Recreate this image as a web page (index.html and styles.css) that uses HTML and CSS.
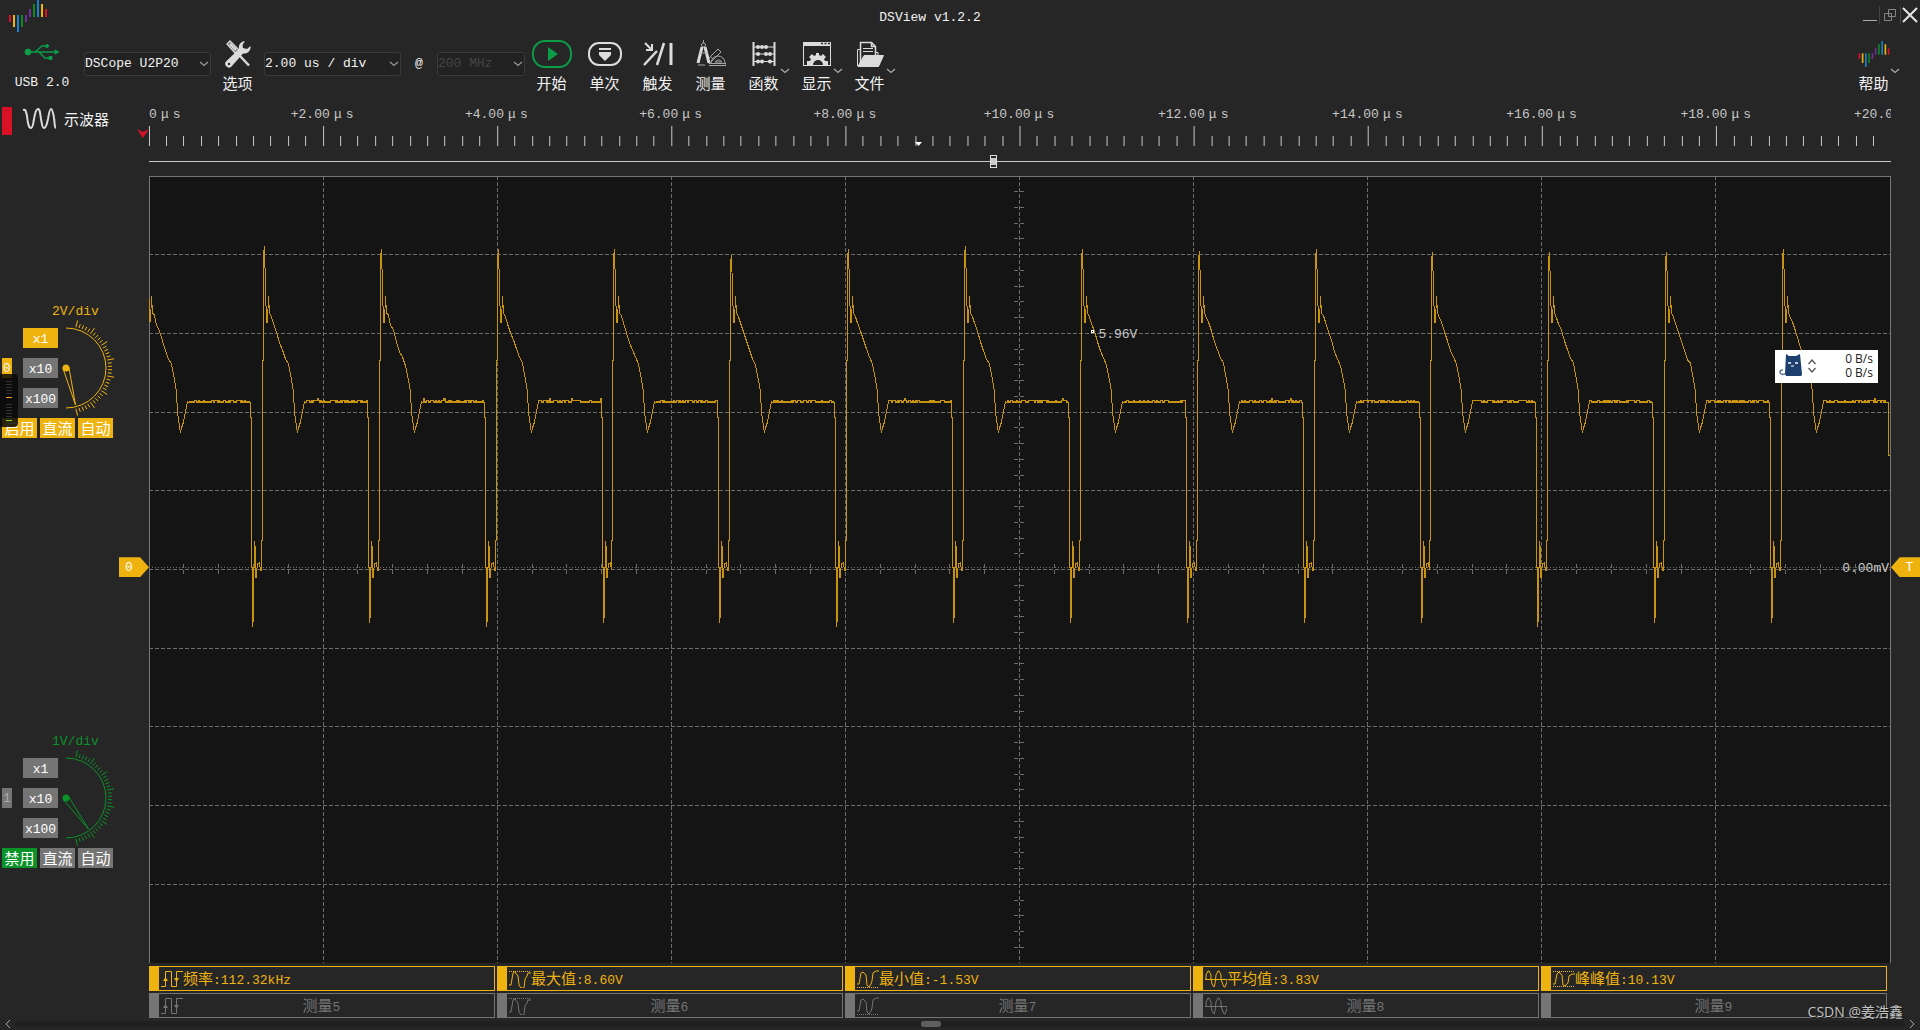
FILE: index.html
```html
<!DOCTYPE html>
<html lang="zh-CN">
<head>
<meta charset="utf-8">
<title>DSView v1.2.2</title>
<link rel="stylesheet" href="styles.css">
</head>
<body>
<svg class="defs" aria-hidden="true">
  <symbol id="logo" viewBox="0 0 38 32">
    <g fill="#d81126"><path d="M0 15h2v7H0zM36 9h2v8h-2z"/></g>
    <g fill="#f2b20f"><path d="M4 15h2v12H4zM32 4h2v13h-2z"/></g>
    <g fill="#1783cf"><path d="M8 15h2v17H8zM28 0h2v17h-2z"/></g>
    <g fill="#0d8a20"><path d="M12 15h2v12h-2zM24 4h2v13h-2z"/></g>
    <g fill="#72309a"><path d="M16 15h2v7h-2zM20 9h2v8h-2z"/></g>
  </symbol>
  <symbol id="chevron" viewBox="0 0 10 6"><path d="M1 1l4 3.500 4-3.500" fill="none" stroke="currentColor" stroke-width="1.300"/></symbol>
  <symbol id="m-freq" viewBox="0 0 22 18"><path d="M0 16.500h4.500V1.500h6v15h5V1.500h6.500" fill="none" stroke="currentColor"/><path d="M2 11h5l-2.500-4zM13 8h5l-2.500 4z" fill="currentColor"/></symbol>
  <symbol id="m-max" viewBox="0 0 22 18"><path d="M0 1.500h22" stroke="currentColor" stroke-dasharray="1 1"/><path d="M0 15h2l2-12 2-1 3 4 1 9 2 3h3l1-9 2-3 1-3h3" fill="none" stroke="currentColor"/></symbol>
  <symbol id="m-min" viewBox="0 0 22 18"><path d="M0 17.500h22" stroke="currentColor" stroke-dasharray="1 1"/><path d="M0 14h2l2-11 2-1 3 3 1 10 2 2 2-3 1-3 1-8 3-2h3" fill="none" stroke="currentColor"/></symbol>
  <symbol id="m-avg" viewBox="0 0 22 18"><path d="M0 9.500h22M1 9V5l2-4h1l2 4v4l1 5 2 3 1-3 1-9 2-4h1l2 4v4l2 6 1 2h1l2-5V9" fill="none" stroke="currentColor"/></symbol>
  <symbol id="m-pp" viewBox="0 0 22 18"><path d="M0 1.500h22M0 16.500h22" stroke="currentColor" stroke-dasharray="1 1"/><path d="M0 14h2l2-10 2-2 3 3 1 10 2 1 3-3 1-7 3-2h3" fill="none" stroke="currentColor"/></symbol>
</svg>

<header class="titlebar">
  <svg class="app-logo" width="38" height="32"><use href="#logo"/></svg>
  <h1 class="app-title">DSView v1.2.2</h1>
  <div class="window-controls">
    <button class="win-btn" aria-label="最小化"><svg width="14" height="16"><path d="M0 13.500h14" stroke="#aaa"/></svg></button>
    <button class="win-btn" aria-label="还原"><svg width="14" height="16"><path d="M5.500 2.500h7v7h-7zM1.500 6.500h7v7h-7z" fill="none" stroke="#858585"/></svg></button>
    <button class="win-btn" aria-label="关闭"><svg width="16" height="16"><path d="M1 1l14 14M15 1L1 15" stroke="#e6e6e6" stroke-width="2"/></svg></button>
  </div>
</header>

<nav class="toolbar">
  <button class="tool tool-usb">
    <span class="tool-icon"><svg width="36" height="18" viewBox="0 0 36 18" fill="#0b9c48" stroke="#0b9c48"><circle cx="4" cy="9" r="3"/><path d="M4 9h28M11 9l7-6h4M15 9l6 6h5" fill="none" stroke-width="1.500"/><path d="M31 7l4 2-4 2z"/><circle cx="23" cy="3" r="1.500"/><path d="M25 13.500h3v3h-3z"/></svg></span>
    <span>USB 2.0</span>
  </button>
  <label class="combo combo-device"><select aria-label="设备"><option>DSCope U2P20</option></select><svg width="10" height="6"><use href="#chevron"/></svg></label>
  <button class="tool">
    <span class="tool-icon"><svg width="26" height="28" viewBox="0 0 26 28"><path d="M2 4l3-3 9 9-4 3z" fill="#777" stroke="#d8d8d8" stroke-width="1.300"/><path d="M5 4l6 6M15 16l9 9.500" stroke="#d8d8d8" stroke-width="2.500"/><path d="M20 1a6.500 6.500 0 0 0-6 8L1.500 21a3.600 3.600 0 0 0 5 5.500L18 13.500a6.500 6.500 0 0 0 7.500-7.500l-3.500 3-4-1-.5-3z" fill="#dcdcdc"/><circle cx="4" cy="24" r="1.200" fill="#262626"/></svg></span>
    <span class="cjk">选项</span>
  </button>
  <label class="combo combo-timebase"><select aria-label="时基"><option>2.00 us / div</option></select><svg width="10" height="6"><use href="#chevron"/></svg></label>
  <span class="at">@</span>
  <label class="combo combo-rate"><select aria-label="采样率" disabled><option>200 MHz</option></select><svg width="10" height="6"><use href="#chevron"/></svg></label>
  <button class="tool">
    <span class="tool-icon"><svg width="40" height="28"><rect x="1" y="1" width="38" height="26" rx="12" fill="none" stroke="#0b9c48" stroke-width="2"/><path d="M16 7v14l10-7z" fill="#0b9c48"/></svg></span>
    <span class="cjk">开始</span>
  </button>
  <button class="tool">
    <span class="tool-icon"><svg width="34" height="24"><rect x="1" y="1" width="32" height="22" rx="10" fill="none" stroke="#dcdcdc" stroke-width="2"/><path d="M11 6h12v2H11zM11 10h12v3l-6 6-6-6z" fill="#dcdcdc"/></svg></span>
    <span class="cjk">单次</span>
  </button>
  <button class="tool">
    <span class="tool-icon"><svg width="30" height="24" fill="none" stroke="#dcdcdc"><path d="M1 23L14 9M14 23l7-22" stroke-width="2.500"/><path d="M28 1v22" stroke-width="3"/><path d="M2 1l6 6M9 2v6H3" stroke-width="2"/></svg></span>
    <span class="cjk">触发</span>
  </button>
  <button class="tool">
    <span class="tool-icon"><svg width="30" height="27" fill="none" stroke="#a8a8a8"><path d="M12 19L22 9l3 3-10 10M14 16l3 3M15 23a7 7 0 0 1 14 0M13 25.500h17v-2H13M19 22a4 4 0 0 1 7 0z"/><circle cx="7.500" cy="5" r="2"/><path d="M7.500 0v3M2 25h7"/><path d="M6 7L2 23M9 7l4 16" stroke-width="3" stroke="#dcdcdc"/><path d="M4 13h7"/></svg></span>
    <span class="cjk">测量</span>
  </button>
  <button class="tool">
    <span class="tool-icon"><svg width="24" height="24"><path d="M1.500 0v24M22.500 0v24" stroke="#dcdcdc" stroke-width="2"/><path d="M2 5h20M2 12h20M2 19.500h20" stroke="#dcdcdc"/><g fill="#dcdcdc"><circle cx="6" cy="5" r="2"/><circle cx="10" cy="5" r="2"/><circle cx="14" cy="5" r="2"/><circle cx="6" cy="12" r="2"/><circle cx="14" cy="12" r="2"/><circle cx="18" cy="12" r="2"/><circle cx="6" cy="19.500" r="2"/><circle cx="10" cy="19.500" r="2"/><circle cx="18" cy="19.500" r="2"/></g></svg></span>
    <span class="cjk">函数</span>
    <svg class="tool-arrow" width="10" height="6"><use href="#chevron"/></svg>
  </button>
  <button class="tool">
    <span class="tool-icon"><svg width="28" height="24"><path d="M0 0h28v24H0zM1 4v19h26V4z" fill="#dcdcdc" fill-rule="evenodd"/><path d="M18 1.500h2M21.500 1.500h2M25 1.500h2" stroke="#262626" stroke-width="1.500"/><path d="M4 23v-4h3l1-2-2-2 3-3 2 2 2-1v-2h3v2l2 1 2-2 3 3-2 2 1 2h3v4h-5a5 5 0 0 0-10 0z" fill="#dcdcdc"/></svg></span>
    <span class="cjk">显示</span>
    <svg class="tool-arrow" width="10" height="6"><use href="#chevron"/></svg>
  </button>
  <button class="tool">
    <span class="tool-icon"><svg width="28" height="26" fill="none" stroke="#dcdcdc"><path d="M4.500 22V1.500h11l4 4V15M15.500 1.500v4h4" stroke-width="1.500"/><path d="M7 7.500h10M7 10.500h10M4 8.500H1.500V25M20 11.500h2V15"/><path d="M2 25.500l6-11h19.500l-5 11z" fill="#dcdcdc"/></svg></span>
    <span class="cjk">文件</span>
    <svg class="tool-arrow" width="10" height="6"><use href="#chevron"/></svg>
  </button>
  <button class="tool tool-help">
    <span class="tool-icon"><svg width="32" height="26"><use href="#logo"/></svg></span>
    <span class="cjk">帮助</span>
    <svg class="tool-arrow" width="10" height="6"><use href="#chevron"/></svg>
  </button>
</nav>

<main class="workspace">
  <aside class="side">
    <div class="mode">
      <span class="mode-bar"></span>
      <svg width="34" height="22" viewBox="0 0 34 22"><path d="M1 2c3-1 3 2 4 6 1 9 2 12 4 12s2-4 3-9c1-6 2-10 4-10s2 4 3 10c1 5 1 9 3 9s3-4 4-9c1-6 2-10 3-10s2 3 3 9c1 5 0 9 2 10" fill="none" stroke="#dcdcdc" stroke-width="2"/></svg>
      <span class="cjk">示波器</span>
    </div>
    <div class="channels">
      <section class="channel ch0">
        <h2 class="scale">2V/div</h2>
        <div class="probe">
          <span class="tag">0</span>
          <div class="factors"><button class="key on">x1</button><button class="key">x10</button><button class="key">x100</button></div>
          <svg class="dial" width="54" height="100" data-tip="9.5,37"></svg>
        </div>
        <div class="toggles cjk"><button class="key on">启用</button><button class="key on">直流</button><button class="key on">自动</button></div>
      </section>
      <section class="channel ch1">
        <h2 class="scale">1V/div</h2>
        <div class="probe">
          <span class="tag">1</span>
          <div class="factors"><button class="key">x1</button><button class="key">x10</button><button class="key">x100</button></div>
          <svg class="dial" width="54" height="100" data-tip="22.5,31"></svg>
        </div>
        <div class="toggles cjk"><button class="key on">禁用</button><button class="key">直流</button><button class="key">自动</button></div>
      </section>
    </div>
  </aside>

  <section class="scope">
    <div class="ruler">
      <div class="labels" id="labels"></div>
      <svg class="ticks" id="ticks" viewBox="0 0 1741 20" preserveAspectRatio="none"></svg>
      <svg class="trigger-pos" width="12" height="9"><path d="M0 0l6 3 6-3-6 9z" fill="#d81126"/></svg>
      <svg class="cursor-pos" width="7" height="4"><path d="M0 0h7L3.500 4z" fill="#fff"/></svg>
    </div>
    <div class="overview"><span class="overview-grip"></span></div>
    <div class="plot">
      <svg class="graph" id="graph" viewBox="0 0 1742 787" preserveAspectRatio="none"></svg>
      <span class="flag flag-zero">0</span>
      <span class="flag flag-trigger">T</span>
      <span class="probe-dot"></span>
      <span class="probe-value">5.96V</span>
      <span class="level">0.00mV</span>
    </div>
    <div class="measures">
      <div class="measure live"><svg width="22" height="18"><use href="#m-freq"/></svg><span><span class="cjk">频率</span>:112.32kHz</span></div>
      <div class="measure live"><svg width="22" height="18"><use href="#m-max"/></svg><span><span class="cjk">最大值</span>:8.60V</span></div>
      <div class="measure live"><svg width="22" height="18"><use href="#m-min"/></svg><span><span class="cjk">最小值</span>:-1.53V</span></div>
      <div class="measure live"><svg width="22" height="18"><use href="#m-avg"/></svg><span><span class="cjk">平均值</span>:3.83V</span></div>
      <div class="measure live"><svg width="22" height="18"><use href="#m-pp"/></svg><span><span class="cjk">峰峰值</span>:10.13V</span></div>
      <div class="measure"><svg width="22" height="18"><use href="#m-freq"/></svg><span class="slot"><span class="cjk">测量</span>5</span></div>
      <div class="measure"><svg width="22" height="18"><use href="#m-max"/></svg><span class="slot"><span class="cjk">测量</span>6</span></div>
      <div class="measure"><svg width="22" height="18"><use href="#m-min"/></svg><span class="slot"><span class="cjk">测量</span>7</span></div>
      <div class="measure"><svg width="22" height="18"><use href="#m-avg"/></svg><span class="slot"><span class="cjk">测量</span>8</span></div>
      <div class="measure"><svg width="22" height="18"></svg><span class="slot"><span class="cjk">测量</span>9</span></div>
    </div>
  </section>
</main>

<footer class="scrollbar">
  <svg width="6" height="8"><path d="M5 0L1 4l4 4" fill="none" stroke="#aaa"/></svg>
  <div class="track"><span class="thumb"></span></div>
  <svg width="6" height="8"><path d="M1 0l4 4-4 4" fill="none" stroke="#aaa"/></svg>
</footer>

<div class="meter"><svg width="18" height="53"><path d="M6 7.500h6M6 10.500h6M6 13.500h6M6 16.500h6M6 19.500h6M6 30.500h6M6 33.500h6M6 36.500h6M6 39.500h6M6 42.500h6" stroke="#333"/><path d="M6 23.500h6" stroke="#f7a31a"/><path d="M6 46.500h6" stroke="#7be01c"/></svg></div>

<div class="netspeed">
  <svg width="23" height="23" viewBox="0 0 23 23"><path d="M7 0l3 2h7l4-2 2 20c0 2-1 2-3 2H7l-1-2z" fill="#1c3f70"/><path d="M6 20c-3 1-5 0-5-2 0-1 1-2 3-2" fill="none" stroke="#5c7596" stroke-width="1.500"/><path d="M9 9h3M16 9h3" stroke="#fff" stroke-width="1.500"/><path d="M12 12h3" stroke="#fff"/></svg>
  <svg width="8" height="14"><path d="M0.500 5L4 1l3.500 4M0.500 9L4 13l3.500-4" fill="none" stroke="#555" stroke-width="1.300"/></svg>
  <div class="rates"><span>0 B/s</span><span>0 B/s</span></div>
</div>
<div class="watermark">CSDN @姜浩鑫</div>
<script src="scope.js"></script>
</body>
</html>
```

FILE: styles.css
```css
:root {
  --bg: #262626;
  --amber: #efb310;
  --green: #0a9328;
  --grey: #757575;
  --text: #f2f2f2;
  --dim: #c8c8c8;
}
* { box-sizing: border-box; }
body {
  margin: 0;
  min-height: 100vh;
  display: flex;
  flex-direction: column;
  position: relative;
  background: var(--bg);
  color: var(--text);
  font: 13px/20px "Liberation Mono", "Noto Sans CJK SC", monospace;
  overflow-x: hidden;
}
svg { display: block; flex: none; }
button, select { font: inherit; color: inherit; background: none; border: 0; padding: 0; }
.cjk { font-size: 15px; }
.cjk, .cjk button { font-family: "Noto Sans CJK SC", sans-serif; }
.defs { position: absolute; width: 0; height: 0; }

/* Title bar */
.titlebar { display: grid; grid-template-columns: 1fr auto; height: 34px; }
.app-logo { grid-area: 1 / 1; margin-left: 9px; }
.app-title { grid-area: 1 / 1; margin: 8px 0 0; text-align: center; font-size: 13px; line-height: 20px; font-weight: 400; }
.window-controls { display: flex; align-items: center; height: 30px; width: 60px; }
.win-btn { flex: 1; height: 18px; display: flex; justify-content: center; align-items: center; }
.win-btn + .win-btn { border-left: 1px solid #444; }

/* Toolbar */
.toolbar { display: flex; align-items: center; height: 69px; padding-bottom: 10px; }
.tool { width: 53px; height: 59px; padding-top: 5px; display: flex; flex-direction: column; align-items: center; gap: 5px; position: relative; white-space: nowrap; }
.tool-usb { width: 84px; gap: 8px; }
.tool-icon { height: 30px; display: flex; align-items: center; }
.tool-arrow { position: absolute; right: 0; top: 34px; color: #aaa; }
.tool-help { margin: 0 20px 0 auto; }
.combo { position: relative; height: 24px; border: 1px solid #3a3a3a; border-radius: 3px; background: #222; }
.combo select { display: block; width: 100%; height: 22px; padding: 1px 0 0; appearance: none; outline: 0; }
.combo select:disabled { color: #444; opacity: 1; }
.combo svg { position: absolute; right: 1px; top: 8px; color: #999; pointer-events: none; }
.combo-device { width: 127px; }
.combo-timebase { width: 137px; }
.combo-rate { width: 88px; }
.at { width: 36px; text-align: center; }

/* Work area */
.workspace { flex: 1; display: grid; grid-template-columns: 149px 1fr 29px; }
.side { display: flex; flex-direction: column; margin-bottom: -10px; padding-bottom: 16px; }
.mode { display: flex; align-items: center; height: 32px; padding-left: 2px; gap: 8px; margin-bottom: 19px; }
.mode-bar { width: 10px; height: 28px; margin: 4px 2px 0 0; background: #d81126; }
.channels { flex: 1; display: flex; flex-direction: column; }
.channel { flex: 1; display: flex; flex-direction: column; justify-content: center; padding-left: 2px; }
.ch0 { --tone: var(--amber); --tag: var(--amber); }
.ch1 { --tone: var(--green); --tag: var(--grey); }
.ch1 .tag { color: #aaa; }
.scale { margin: 0 0 6px 50px; padding-top: 1px; color: var(--tone); font-size: 13px; line-height: 20px; font-weight: 400; }
.probe { display: flex; align-items: center; gap: 4px; height: 80px; }
.tag { width: 10px; height: 20px; margin-right: 7px; background: var(--tag); line-height: 22px; text-align: center; }
.factors { display: flex; flex-direction: column; gap: 10px; }
.key { width: 35px; height: 20px; background: var(--grey); color: #fff; white-space: nowrap; }
.factors .key { padding-top: 2px; }
.key.on { background: var(--tone); }
.dial { color: var(--tone); }
.toggles { display: flex; gap: 3px; margin-top: 10px; line-height: 20px; }

/* Time ruler */
.scope { display: flex; flex-direction: column; min-width: 0; }
.ruler { position: relative; padding-top: 3px; }
.labels { position: relative; height: 20px; overflow: hidden; color: var(--dim); }
.labels span { position: absolute; top: 0; width: 72px; margin-left: -37px; text-align: center; line-height: 18px; white-space: nowrap; }
.labels span.first { margin-left: 0; text-align: left; }
.labels span.last { text-align: left; }
.labels i { display: inline-block; width: 16px; text-align: center; font-style: normal; }
.ticks { width: 100%; height: 20px; }
.trigger-pos { position: absolute; left: -12px; top: 26px; }
.cursor-pos { position: absolute; left: 44%; top: 39px; }
.overview { height: 30px; position: relative; display: flex; align-items: center; }
.overview::before { content: ""; flex: 1; border-top: 1px solid var(--dim); }
.overview-grip { position: absolute; left: 48.3%; top: 9px; width: 7px; height: 13px; border: 1px solid #ddd; background: linear-gradient(#262626 2px, #c8c8c8 2px 9px, #262626 9px); }

/* Plot */
.plot { flex: 1; min-height: 400px; position: relative; background: #141414; }
.graph { position: absolute; inset: 0; width: 100%; height: 100%; shape-rendering: crispEdges; }
.flag { position: absolute; top: calc(49.7% - 10px); width: 30px; height: 20px; background: var(--amber); line-height: 22px; text-align: center; color: #fff; }
.flag-zero { right: 100%; padding-right: 10px; clip-path: polygon(0 0, 70% 0, 100% 50%, 70% 100%, 0 100%); }
.flag-trigger { left: 100%; width: 29px; padding-left: 8px; clip-path: polygon(0 50%, 30% 0, 100% 0, 100% 100%, 30% 100%); }
.probe-dot { position: absolute; left: 54.1%; top: 19.6%; width: 3px; height: 3px; border: 1px solid #fff; }
.probe-value { position: absolute; left: 54.5%; top: calc(20% - 8px); color: var(--dim); }
.level { position: absolute; right: 2px; top: calc(49.7% - 8px); color: var(--dim); }

/* Measurements */
.measures { display: grid; grid-template-columns: repeat(5, 1fr); gap: 2px; padding: 3px 4px 2px 0; }
.measure { display: flex; align-items: center; height: 25px; border: 1px solid var(--grey); border-left-width: 10px; padding-left: 2px; color: var(--grey); line-height: 23px; white-space: nowrap; }
.measure.live { border-color: var(--amber); color: var(--amber); }
.slot { flex: 1; text-align: center; padding-right: 34px; }

/* Scroll bar */
.scrollbar { display: flex; align-items: center; gap: 4px; height: 10px; padding: 0 5px 2px; }
.track { flex: 1; height: 6px; background: #202020; border-radius: 3px; display: flex; justify-content: center; padding-right: 58px; }
.thumb { width: 20px; height: 6px; border-radius: 3px; background: #606060; }

/* Floating items */
.meter { position: absolute; left: 0; top: 374px; width: 18px; height: 53px; border-radius: 0 4px 4px 0; background: rgba(8, 8, 8, 0.85); }
.netspeed { position: absolute; right: 42px; top: 350px; width: 103px; height: 33px; padding: 0 5px 2px 4px; background: #fff; display: flex; align-items: center; gap: 6px; color: #222; font: 12px/14px "Open Sans", sans-serif; }
.rates { flex: 1; display: flex; flex-direction: column; align-items: flex-end; }
.watermark { position: absolute; right: 17px; bottom: 8px; color: #c4c4c4; font: 14px/20px "Open Sans", "Noto Sans CJK SC", sans-serif; text-shadow: 1px 1px 1px #111; }
```

FILE: scope.js
```js
const NS = 'http://www.w3.org/2000/svg';
function draw(parent, d, stroke, dash) {
  const p = document.createElementNS(NS, 'path');
  p.setAttribute('d', d);
  p.setAttribute('fill', 'none');
  p.setAttribute('stroke', stroke);
  if (dash) p.setAttribute('stroke-dasharray', dash);
  parent.appendChild(p);
}

// Time ruler: 10 divisions of 2 us, 10 minor ticks in each
const DIV = 174.1;
const labels = document.getElementById('labels');
let tickPath = '';
for (let i = 0; i <= 10; i++) {
  const s = document.createElement('span');
  s.innerHTML = (i === 0 ? '0' : '+' + (i * 2).toFixed(2)) + (i === 10 ? '' : '<i>μ</i>s');
  if (i === 0) s.className = 'first';
  if (i === 10) s.className = 'last';
  s.style.left = i * 10 + '%';
  labels.appendChild(s);
}
for (let i = 0; i < 100; i++) {
  tickPath += `M${Math.floor(i * DIV / 10) + 0.5} ${i % 10 ? 10 : 0}V20`;
}
draw(document.getElementById('ticks'), tickPath, '#c8c8c8');

// Graticule
const graph = document.getElementById('graph');
const VD = 78.7, GRID = '#6b6b6b';
let grid = '';
for (let i = 1; i < 10; i++) {
  grid += `M0 ${Math.floor(i * VD) + 0.5}H1741`;
  grid += `M${Math.floor(i * DIV) + 0.5} 0V787`;
}
draw(graph, grid, GRID, '4 2');
let marks = '';
for (let i = 1; i < 50; i++) {
  if (i % 5 === 0) continue;
  const x = Math.floor(i * DIV / 5) + 0.5, y = Math.floor(i * VD / 5) + 0.5;
  marks += `M${x} 388v4M${x} 394v4M865 ${y}h4M871 ${y}h4`;
}
draw(graph, marks, GRID);
draw(graph, 'M0 391.5H1741', GRID, '1 2');
draw(graph, 'M0.5 787V0.5H1741.5V787', '#757575');

// Acquired waveform
let seed = 7;
const rnd = () => (seed = (seed * 16807) % 2147483647) / 2147483647;
const tops = [72, 70, 73, 73, 73, 79, 73, 70, 73, 75, 73, 76, 76, 76, 73];
const lows = [451, 447, 451, 447, 447, 451, 447, 447, 447, 447, 447, 451, 447, 447, 447];
const decay = [[1, 112], [2, 146], [3, 146], [4, 120], [5, 137], [7, 140], [9, 147], [12, 155], [15, 165], [18, 174], [21, 182],
  [24, 188], [27, 204], [29, 216], [30, 237], [32, 250], [33, 257], [34, 252], [36, 246], [38, 236], [40, 225]];
let d = 'M0.5 146V123';
for (let k = 0; k < 15; k++) {
  const x0 = Math.round(-2 + k * 116.85) + 0.5;
  if (k > 0) {
    d += `H${x0 - 3}V364H${x0 - 2}V184H${x0 - 1}V${tops[k] + 4}H${x0}V${tops[k]}`;
  }
  for (const [x, y] of decay) {
    if (x0 + x > 1) {
      const jitter = x > 6 && x < 26 ? Math.round(rnd() * 3 - 1) : 0;
      d += `L${x0 + x} ${y + jitter}`;
    }
  }
  for (let x = 41; x < 103; x++) {
    const r = rnd();
    const y = r > 0.985 ? 222.5 : r > 0.42 ? 226.5 : 224.5;
    d += `V224.5V${y}H${x0 + x + 1}`;
  }
  if (k === 14) {
    d += `H1739.5V279.5H1741`;
  } else {
    const f = x0 + 104;
    d += `V241H${f}V391H${f + 1}V${lows[k]}V${lows[k] - 6}H${f + 2}V391H${f + 3}V365V370H${f + 4}V401H${f + 5}V396`;
    d += `L${f + 6} 388L${f + 8} 387L${f + 9} 394`;
  }
}
draw(graph, d, '#c8940f');

// Volts-per-division dials
document.querySelectorAll('.dial').forEach(dial => {
  const cx = 4, cy = 50;
  draw(dial, `M${cx} ${cy - 40}a40 40 0 0 1 0 80`, 'currentColor');
  let t = '';
  for (let i = 0; i <= 35; i++) {
    const a = (13.7 + i * 4.36) * Math.PI / 180;
    const r = i % 5 ? 46 : 49;
    t += `M${cx + 42 * Math.sin(a)} ${cy - 42 * Math.cos(a)}L${cx + r * Math.sin(a)} ${cy - r * Math.cos(a)}`;
  }
  draw(dial, t, 'currentColor');
  const [tx, ty] = dial.dataset.tip.split(',').map(Number);
  const n = Math.hypot(tx, ty), nx = ty / n * 3, ny = -tx / n * 3;
  draw(dial, `M${cx + nx} ${cy + ny}L${cx + tx} ${cy + ty}L${cx - nx} ${cy - ny}`, 'currentColor');
  const hub = document.createElementNS(NS, 'circle');
  hub.setAttribute('cx', cx);
  hub.setAttribute('cy', cy);
  hub.setAttribute('r', 3.5);
  hub.setAttribute('fill', 'currentColor');
  dial.appendChild(hub);
});
```
